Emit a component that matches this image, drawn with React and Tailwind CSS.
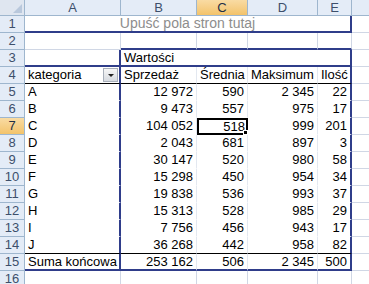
import React from 'react';

const rows = [
  ['A', '12 972', '590', '2 345', '22'],
  ['B', '9 473', '557', '975', '17'],
  ['C', '104 052', '518', '999', '201'],
  ['D', '2 043', '681', '897', '3'],
  ['E', '30 147', '520', '980', '58'],
  ['F', '15 298', '450', '954', '34'],
  ['G', '19 838', '536', '993', '37'],
  ['H', '15 313', '528', '985', '29'],
  ['I', '7 756', '456', '943', '17'],
  ['J', '36 268', '442', '958', '82'],
];

const cols = ['A', 'B', 'C', 'D', 'E', ''];

// border presets (side-specific so colours never clash)
const R_GRAY = 'border-r border-r-[#d0d7e5]';
const R_FAINT = 'border-r border-r-[#e3e8f0]';
const R_BLUE = 'border-r-2 border-r-[#2f3d8a]';
const B_GRAY = 'border-b border-b-[#d0d7e5]';
const B_NONE = 'border-b border-b-transparent';
const B_BLUE = 'border-b-2 border-b-[#2f3d8a]';
const B_BLACK = 'border-b border-b-black';

const Cell = ({ children, r = R_GRAY, b = B_GRAY, right = false, className = '' }) => (
  <div
    className={`relative flex items-center overflow-hidden whitespace-nowrap px-[3px] ${r} ${b} ${
      right ? 'justify-end' : ''
    } ${className}`}
  >
    {children}
  </div>
);

const RowHead = ({ n, active }) => (
  <div
    className={`flex items-center justify-center border-r border-b border-[#9eb6ce] ${
      active ? 'bg-linear-to-b from-[#f9dba3] to-[#f3c36a] text-[#1f2f46]' : 'bg-[#e4ecf7] text-[#3d4f6b]'
    }`}
  >
    {n}
  </div>
);

const App = () => {
  return (
    <div
      className="w-[369px] h-[284px] overflow-hidden bg-white text-[13px] text-black"
      style={{ fontFamily: '"Liberation Sans", Arial, sans-serif' }}
    >
      <div className="grid grid-cols-[25px_96px_76px_51px_70px_34px_60px] grid-rows-[16px_repeat(16,17px)]">
        {/* column headers */}
        <div className="relative border-r border-b border-[#9eb6ce] bg-[#dfe6f0]">
          <div className="absolute right-[2px] bottom-[2px] w-0 h-0 border-l-[9px] border-l-transparent border-b-[9px] border-b-[#b9c8dc]" />
        </div>
        {cols.map((c) => (
          <div
            key={c || 'f'}
            className={`flex items-center justify-center border-r border-b border-[#9eb6ce] ${
              c === 'C' ? 'bg-linear-to-b from-[#f9dba3] to-[#f3c36a] text-[#1f2f46]' : 'bg-[#e4ecf7] text-[#3d4f6b]'
            }`}
          >
            {c}
          </div>
        ))}

        {/* row 1: page field drop zone */}
        <RowHead n={1} />
        <div className={`col-span-5 flex items-center justify-center ${R_BLUE} ${B_BLUE} text-[#8d8d8d] text-[14px]`}>
          Upuść pola stron tutaj
        </div>
        <Cell />

        {/* row 2 */}
        <RowHead n={2} />
        <Cell />
        <Cell b={B_BLUE} />
        <Cell b={B_BLUE} />
        <Cell b={B_BLUE} />
        <Cell b={B_BLUE} />
        <Cell />

        {/* row 3 */}
        <RowHead n={3} />
        <Cell r={R_BLUE} b={B_BLUE} />
        <Cell r="" b={B_BLUE}>Wartości</Cell>
        <Cell r="" b={B_BLUE} />
        <Cell r="" b={B_BLUE} />
        <Cell r={R_BLUE} b={B_BLUE} />
        <Cell />

        {/* row 4: field headers */}
        <RowHead n={4} />
        <Cell r={R_BLUE} b={B_BLACK} className="justify-between !pr-[1px]">
          <span>kategoria</span>
          <span className="flex items-center justify-center w-[15px] h-[14px] border border-[#a8afba] bg-linear-to-b from-[#f6f6f6] to-[#d6dae0]">
            <span className="w-0 h-0 border-l-[3px] border-r-[3px] border-t-[3px] border-l-transparent border-r-transparent border-t-[#222]" />
          </span>
        </Cell>
        <Cell r={R_FAINT} b={B_BLACK}>Sprzedaż</Cell>
        <Cell r={R_FAINT} b={B_BLACK}>Średnia</Cell>
        <Cell r={R_FAINT} b={B_BLACK}>Maksimum</Cell>
        <Cell r={R_BLUE} b={B_BLACK}>Ilość</Cell>
        <Cell />

        {/* data rows */}
        {rows.map((r, i) => {
          const n = i + 5;
          const b = i === rows.length - 1 ? B_BLACK : B_NONE;
          return (
            <React.Fragment key={r[0]}>
              <RowHead n={n} active={n === 7} />
              <Cell r={R_BLUE} b={b}>{r[0]}</Cell>
              <Cell right r={R_FAINT} b={b}>{r[1]}</Cell>
              {n === 7 ? (
                <Cell right r="" b="" className="!p-0">
                  <div className="flex items-center justify-end w-full h-full border-2 border-black pr-[1px]">
                    518
                  </div>
                  <div className="absolute right-0 bottom-0 w-[5px] h-[5px] bg-black border border-white" />
                </Cell>
              ) : (
                <Cell right r={R_FAINT} b={b}>{r[2]}</Cell>
              )}
              <Cell right r={R_FAINT} b={b}>{r[3]}</Cell>
              <Cell right r={R_BLUE} b={b}>{r[4]}</Cell>
              <Cell />
            </React.Fragment>
          );
        })}

        {/* row 15: grand total */}
        <RowHead n={15} />
        <Cell r={R_BLUE} b={B_BLUE}>Suma końcowa</Cell>
        <Cell right r={R_FAINT} b={B_BLUE}>253 162</Cell>
        <Cell right r={R_FAINT} b={B_BLUE}>506</Cell>
        <Cell right r={R_FAINT} b={B_BLUE}>2 345</Cell>
        <Cell right r={R_BLUE} b={B_BLUE}>500</Cell>
        <Cell />

        {/* row 16 */}
        <RowHead n={16} />
        {cols.map((c) => (
          <Cell key={c || 'f'} />
        ))}
      </div>
    </div>
  );
};

export default App;
